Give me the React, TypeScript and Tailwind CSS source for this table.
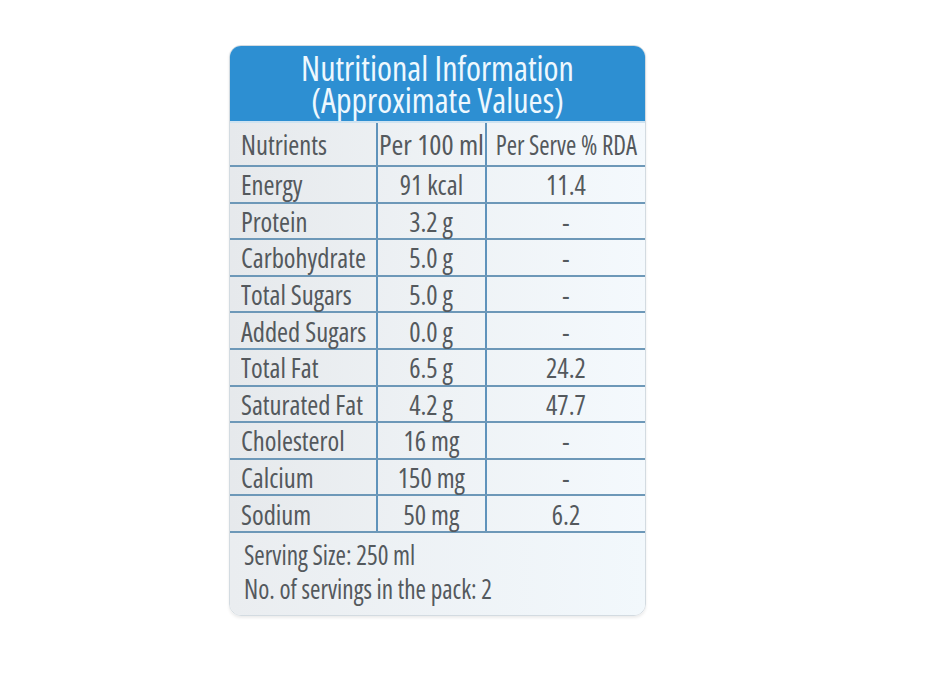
const rows: [string, string, string][] = [
  ['Energy', '91 kcal', '11.4'],
  ['Protein', '3.2 g', '-'],
  ['Carbohydrate', '5.0 g', '-'],
  ['Total Sugars', '5.0 g', '-'],
  ['Added Sugars', '0.0 g', '-'],
  ['Total Fat', '6.5 g', '24.2'],
  ['Saturated Fat', '4.2 g', '47.7'],
  ['Cholesterol', '16 mg', '-'],
  ['Calcium', '150 mg', '-'],
  ['Sodium', '50 mg', '6.2'],
]

function Row({ cells, header }: { cells: [string, string, string]; header?: boolean }) {
  return (
    <div
      className={`grid grid-cols-[148px_109px_1fr] border-b-2 border-[#6d98b8] ${
        header ? 'h-[44px]' : 'h-[36.6px]'
      }`}
    >
      <div className="flex items-center pl-[11px] border-r-2 border-[#5f93bb] whitespace-nowrap">
        <span className="inline-block origin-left scale-x-[0.95]">{cells[0]}</span>
      </div>
      <div className="flex items-center justify-center border-r-2 border-[#5f93bb] whitespace-nowrap">
        <span className={`inline-block origin-center ${header ? 'scale-x-[1.02]' : 'scale-x-[0.95]'}`}>{cells[1]}</span>
      </div>
      <div className="flex items-center justify-center whitespace-nowrap">
        <span className={`inline-block origin-center ${header ? 'scale-x-[0.89]' : 'scale-x-[0.95]'}`}>{cells[2]}</span>
      </div>
    </div>
  )
}

export default function App() {
  return (
    <div className="min-h-screen bg-white pt-[45px] pl-[229px] font-['Open_Sans',sans-serif] [font-stretch:75%]">
      <div className="w-[417px] rounded-[12px] overflow-hidden border border-[#d3dbe1] shadow-[0_2px_3px_rgba(0,0,0,0.08)]">
        {/* Title */}
        <div className="h-[77px] bg-[#2d8fd2] flex flex-col items-center justify-center text-[#eef8fe] text-[34px] leading-[32px] border-b-2 border-[#cfe3f1]">
          <div>Nutritional Information</div>
          <div>(Approximate Values)</div>
        </div>

        {/* Table */}
        <div className="bg-gradient-to-r from-[#e6e9ec] via-[#eef2f5] to-[#f4f9fd] text-[#54595d] text-[28px] leading-none">
          <Row cells={['Nutrients', 'Per 100 ml', 'Per Serve % RDA']} header />
          {rows.map((r) => (
            <Row key={r[0]} cells={r} />
          ))}
        </div>

        {/* Footer */}
        <div className="h-[82px] bg-gradient-to-r from-[#eaedf0] to-[#f2f8fc] text-[#54595d] text-[28px] leading-[34px] pl-[14px] pt-[4px]">
          <div className="origin-left scale-x-[0.9] whitespace-nowrap">Serving Size: 250 ml</div>
          <div className="origin-left scale-x-[0.9] whitespace-nowrap">No. of servings in the pack: 2</div>
        </div>
      </div>
    </div>
  )
}
